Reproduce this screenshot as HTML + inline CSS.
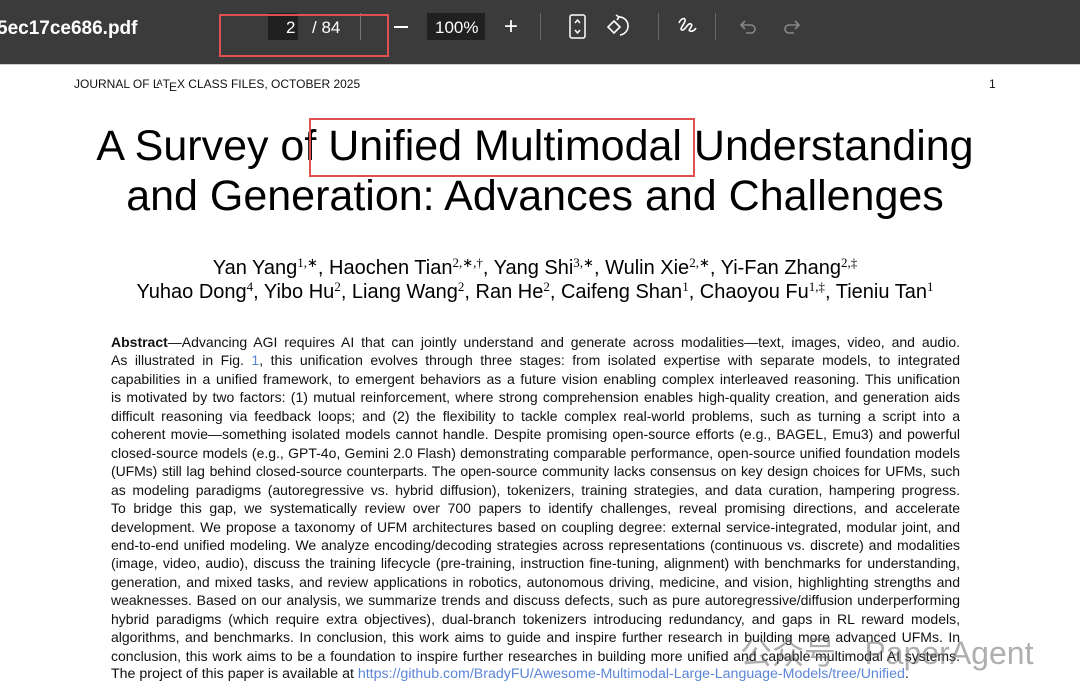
<!DOCTYPE html>
<html><head><meta charset="utf-8"><style>
*{margin:0;padding:0;box-sizing:border-box}
body{width:1080px;height:689px;overflow:hidden;background:#fff;font-family:"Liberation Sans",Arial,sans-serif;position:relative}
.tb{position:absolute;left:0;top:0;width:1080px;height:64px;background:#3b3b3b;color:#fff}
.tb .t{position:absolute;top:18px;font-size:19px}
.ab{position:absolute}
.hdr{position:absolute;top:77px;font-size:12px;color:#111}
.title{position:absolute;left:0;width:1070px;text-align:center;font-size:43px;color:#000;white-space:nowrap}
.auth{position:absolute;left:0;width:1070px;text-align:center;font-size:20px;white-space:nowrap}
sup{font-size:13px;vertical-align:7px;font-family:"Liberation Serif",serif}
.abs{position:absolute;left:111px;width:849px;top:333px;font-size:14px;line-height:18.45px;color:#111}
.abs div{text-align:justify;text-align-last:justify;white-space:nowrap;overflow:visible}
.abs div.l{text-align-last:left;font-size:14.2px}
a{color:#5b86d6;text-decoration:none}
</style></head><body>
<div class="tb">
<div class="t" style="left:-3px;font-weight:bold">5ec17ce686.pdf</div>
<div class="ab" style="left:268px;top:13px;width:30px;height:27px;background:#202020"></div>
<div class="t" style="left:286px;font-size:17px">2</div>
<div class="t" style="left:312px;font-size:17px">/ 84</div>
<div class="ab" style="left:360px;top:13px;width:1px;height:27px;background:#777"></div>
<div class="ab" style="left:219px;top:14px;width:170px;height:43px;border:2px solid #e05050"></div>
<div class="ab" style="left:394px;top:26px;width:14px;height:2px;background:#fff"></div>
<div class="ab" style="left:427px;top:13px;width:58px;height:27px;background:#202020"></div>
<div class="t" style="left:435px;font-size:17px">100%</div>
<div class="t" style="left:504px;font-size:24px;top:13px">+</div>
<div class="ab" style="left:540px;top:13px;width:1px;height:27px;background:#666"></div>
<svg class="ab" style="left:567px;top:14px" width="22" height="26" viewBox="0 0 22 26" fill="none" stroke="#fff" stroke-width="1.5"><rect x="3" y="1" width="15" height="23" rx="2"/><path d="M8 9l2.5-3 2.5 3M8 16l2.5 3 2.5-3"/></svg>
<svg class="ab" style="left:606px;top:13px" width="28" height="26" viewBox="0 0 28 26" fill="none" stroke="#fff" stroke-width="1.6"><path d="M8 8l6 6-6 6-6-6z"/><path d="M12 4a9 9 0 1 1 2 18"/><path d="M10 2l3 2-2 3"/></svg>
<div class="ab" style="left:658px;top:13px;width:1px;height:27px;background:#666"></div>
<svg class="ab" style="left:676px;top:14px" width="24" height="24" viewBox="0 0 24 24" fill="none" stroke="#fff" stroke-width="1.6"><path d="M3 9c2-5 7-6 6-2-1 4-6 8-3 9 3 1 6-8 9-6 3 2-4 6-1 7 2 1 5-1 6-3"/></svg>
<div class="ab" style="left:715px;top:13px;width:1px;height:27px;background:#666"></div>
<svg class="ab" style="left:738px;top:16px" width="22" height="22" viewBox="0 0 22 22" fill="none" stroke="#888" stroke-width="1.6"><path d="M7 5L3 9l4 4M3 9h10a4 4 0 0 1 0 8H8"/></svg>
<svg class="ab" style="left:780px;top:16px" width="22" height="22" viewBox="0 0 22 22" fill="none" stroke="#888" stroke-width="1.6"><path d="M15 5l4 4-4 4M19 9H9a4 4 0 0 0 0 8h5"/></svg>
</div>
<div class="ab" style="left:0;top:64px;width:1080px;height:1px;background:#ccc"></div>
<div class="hdr" style="left:74px">JOURNAL OF L<span style="font-size:9px;vertical-align:2px;margin-left:-3px">A</span>T<span style="vertical-align:-3px;margin-left:-1px">E</span>X CLASS FILES, OCTOBER 2025</div>
<div class="hdr" style="left:989px">1</div>
<div class="title" style="top:122px;left:0px">A Survey of Unified Multimodal Understanding</div>
<div class="title" style="top:172px;left:0px">and Generation: Advances and Challenges</div>
<div class="ab" style="left:309px;top:118px;width:386px;height:59px;border:2px solid #e05050"></div>
<div class="auth" style="top:255px;left:0">Yan Yang<sup>1,∗</sup>, Haochen Tian<sup>2,∗,†</sup>, Yang Shi<sup>3,∗</sup>, Wulin Xie<sup>2,∗</sup>, Yi-Fan Zhang<sup>2,‡</sup></div>
<div class="auth" style="top:279px;left:0">Yuhao Dong<sup>4</sup>, Yibo Hu<sup>2</sup>, Liang Wang<sup>2</sup>, Ran He<sup>2</sup>, Caifeng Shan<sup>1</sup>, Chaoyou Fu<sup>1,‡</sup>, Tieniu Tan<sup>1</sup></div>
<div class="abs">
<div><b>Abstract</b>—Advancing AGI requires AI that can jointly understand and generate across modalities—text, images, video, and audio.</div>
<div>As illustrated in Fig. <a>1</a>, this unification evolves through three stages: from isolated expertise with separate models, to integrated</div>
<div>capabilities in a unified framework, to emergent behaviors as a future vision enabling complex interleaved reasoning. This unification</div>
<div>is motivated by two factors: (1) mutual reinforcement, where strong comprehension enables high-quality creation, and generation aids</div>
<div>difficult reasoning via feedback loops; and (2) the flexibility to tackle complex real-world problems, such as turning a script into a</div>
<div>coherent movie—something isolated models cannot handle. Despite promising open-source efforts (e.g., BAGEL, Emu3) and powerful</div>
<div>closed-source models (e.g., GPT-4o, Gemini 2.0 Flash) demonstrating comparable performance, open-source unified foundation models</div>
<div style="letter-spacing:-0.08px">(UFMs) still lag behind closed-source counterparts. The open-source community lacks consensus on key design choices for UFMs, such</div>
<div>as modeling paradigms (autoregressive vs. hybrid diffusion), tokenizers, training strategies, and data curation, hampering progress.</div>
<div>To bridge this gap, we systematically review over 700 papers to identify challenges, reveal promising directions, and accelerate</div>
<div>development. We propose a taxonomy of UFM architectures based on coupling degree: external service-integrated, modular joint, and</div>
<div>end-to-end unified modeling. We analyze encoding/decoding strategies across representations (continuous vs. discrete) and modalities</div>
<div>(image, video, audio), discuss the training lifecycle (pre-training, instruction fine-tuning, alignment) with benchmarks for understanding,</div>
<div>generation, and mixed tasks, and review applications in robotics, autonomous driving, medicine, and vision, highlighting strengths and</div>
<div>weaknesses. Based on our analysis, we summarize trends and discuss defects, such as pure autoregressive/diffusion underperforming</div>
<div>hybrid paradigms (which require extra objectives), dual-branch tokenizers introducing redundancy, and gaps in RL reward models,</div>
<div>algorithms, and benchmarks. In conclusion, this work aims to guide and inspire further research in building more advanced UFMs. In</div>
<div>conclusion, this work aims to be a foundation to inspire further researches in building more unified and capable multimodal AI systems.</div>
<div class="l">The project of this paper is available at <a>https://github.com/BradyFU/Awesome-Multimodal-Large-Language-Models/tree/Unified</a>.</div>
</div>
<div class="ab" style="left:740px;top:628px;font-size:32px;color:rgba(110,110,110,0.55);font-family:'Liberation Sans','Noto Sans CJK SC',sans-serif;white-space:nowrap">公众号 · PaperAgent</div>
</body></html>
